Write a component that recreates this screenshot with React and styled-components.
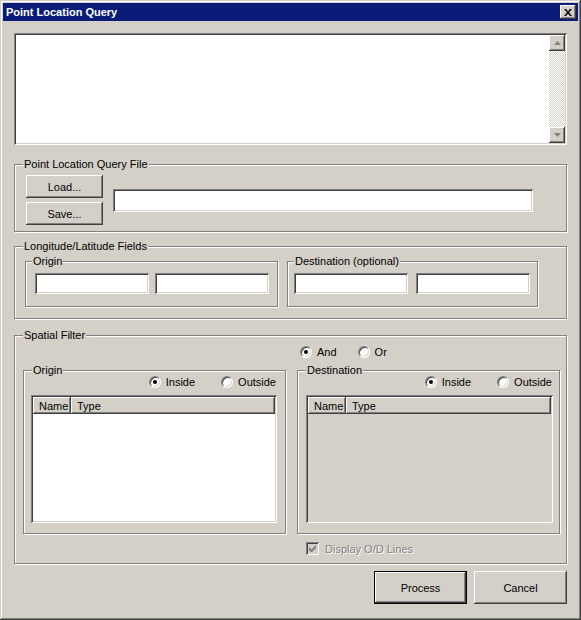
import styled, { createGlobalStyle } from "styled-components";

const GlobalStyle = createGlobalStyle`
  html, body {
    margin: 0;
    padding: 0;
    background: #d4d0c8;
  }
  body {
    font-family: "Liberation Sans", Arial, sans-serif;
    font-size: 11px;
    color: #000;
  }
  * { box-sizing: border-box; }
`;

const raised = `
  box-shadow: inset -1px -1px 0 #404040, inset 1px 1px 0 #fff,
    inset -2px -2px 0 #808080, inset 2px 2px 0 #d4d0c8;
`;

const sunken = `
  box-shadow: inset 1px 1px 0 #808080, inset -1px -1px 0 #fff,
    inset 2px 2px 0 #404040, inset -2px -2px 0 #d4d0c8;
`;

const Window = styled.div`
  width: 581px;
  height: 620px;
  background: #d4d0c8;
  padding: 3px;
  display: flex;
  flex-direction: column;
  box-shadow: inset -1px -1px 0 #404040, inset 1px 1px 0 #d4d0c8,
    inset -2px -2px 0 #808080, inset 2px 2px 0 #fff;
`;

const TitleBar = styled.div`
  height: 18px;
  background: #0a1c78;
  display: flex;
  align-items: center;
  justify-content: space-between;
  padding: 0 2px 0 2px;
`;

const Title = styled.span`
  color: #fff;
  font-weight: bold;
  font-size: 11px;
  padding-left: 1px;
`;

const CloseButton = styled.div`
  width: 16px;
  height: 14px;
  background: #d4d0c8;
  display: flex;
  align-items: center;
  justify-content: center;
  ${raised}
`;

const Body = styled.div`
  padding: 12px 11px 0 11px;
  display: flex;
  flex-direction: column;
`;

const TextBox = styled.div`
  height: 112px;
  background: #fff;
  padding: 2px;
  display: flex;
  justify-content: flex-end;
  ${sunken}
`;

const ScrollBar = styled.div`
  width: 16px;
  display: flex;
  flex-direction: column;
  justify-content: space-between;
  background-image: repeating-conic-gradient(#d4d0c8 0 25%, #fff 0 50%);
  background-size: 2px 2px;
`;

const ScrollButton = styled.div`
  width: 16px;
  height: 16px;
  background: #d4d0c8;
  display: flex;
  align-items: center;
  justify-content: center;
  ${raised}
`;

const Group = styled.div`
  position: relative;
  border: 1px solid #808080;
  box-shadow: inset 1px 1px 0 #fff, 1px 1px 0 #fff;
  margin-top: ${(p) => p.$mt ?? 0}px;
  padding: ${(p) => p.$pad};
`;

const Legend = styled.span`
  position: absolute;
  top: -7px;
  left: ${(p) => p.$left ?? 8}px;
  line-height: 13px;
  padding: 0 1px;
  background: #d4d0c8;
`;

const FileRow = styled.div`
  display: flex;
  align-items: center;
  gap: 10px;
`;

const ButtonStack = styled.div`
  display: flex;
  flex-direction: column;
  gap: 4px;
`;

const Button = styled.div`
  width: ${(p) => p.$w}px;
  height: ${(p) => p.$h}px;
  background: #d4d0c8;
  display: flex;
  align-items: center;
  justify-content: center;
  ${raised}
  ${(p) => p.$default && `border: 1px solid #000;`}
`;

const Input = styled.div`
  width: ${(p) => p.$w}px;
  height: ${(p) => p.$h}px;
  background: #fff;
  ${sunken}
`;

const SubRow = styled.div`
  display: flex;
  gap: 9px;
`;

const SubGroup = styled(Group)`
  width: ${(p) => p.$w}px;
`;

const Fields = styled.div`
  display: flex;
  gap: ${(p) => p.$gap}px;
`;

const FilterGrid = styled.div`
  display: grid;
  grid-template-columns: 263px 263px;
  column-gap: 11px;
`;

const RadioRow = styled.div`
  display: flex;
  align-items: center;
  justify-content: ${(p) => p.$justify ?? "flex-start"};
  gap: ${(p) => p.$gap}px;
  height: 13px;
  padding-left: ${(p) => p.$pl ?? 0}px;
  padding-right: ${(p) => p.$pr ?? 0}px;
`;

const RadioLabel = styled.label`
  display: flex;
  align-items: center;
  gap: 5px;
`;

const RadioCircle = styled.span`
  position: relative;
  width: 12px;
  height: 12px;
  border-radius: 50%;
  background: #fff;
  border: 1px solid;
  border-color: #808080 #fff #fff #808080;
  box-shadow: inset 1px 1px 0 #404040, inset -1px -1px 0 #d4d0c8;
  &::after {
    content: "";
    display: ${(p) => (p.$checked ? "block" : "none")};
    position: absolute;
    left: 3px;
    top: 3px;
    width: 4px;
    height: 4px;
    border-radius: 50%;
    background: #000;
  }
`;

const List = styled.div`
  margin-top: 7px;
  height: 128px;
  padding: 2px;
  background: ${(p) => (p.$disabled ? "#d4d0c8" : "#fff")};
  ${sunken}
`;

const ListHeader = styled.div`
  display: flex;
  height: 17px;
`;

const HeaderCell = styled.div`
  width: ${(p) => (p.$w ? `${p.$w}px` : "auto")};
  flex: ${(p) => (p.$w ? "none" : 1)};
  padding-left: 6px;
  display: flex;
  align-items: center;
  background: #d4d0c8;
  box-shadow: inset -1px -1px 0 #404040, inset 1px 1px 0 #fff,
    inset -2px -2px 0 #808080;
`;

const CheckRow = styled.div`
  grid-column: 2;
  margin-top: 8px;
  padding-left: 9px;
  display: flex;
  align-items: center;
  gap: 6px;
  height: 13px;
`;

const CheckBox = styled.span`
  width: 13px;
  height: 13px;
  background: #d4d0c8;
  display: flex;
  align-items: center;
  justify-content: center;
  ${sunken}
`;

const DisabledText = styled.span`
  color: #808080;
  text-shadow: 1px 1px 0 #fff;
`;

const Footer = styled.div`
  margin-top: 7px;
  display: flex;
  justify-content: flex-end;
  gap: 7px;
`;

function Radio({ checked, children }) {
  return (
    <RadioLabel>
      <RadioCircle $checked={checked} />
      {children}
    </RadioLabel>
  );
}

function ListView({ disabled }) {
  return (
    <List $disabled={disabled}>
      <ListHeader>
        <HeaderCell $w={38}>Name</HeaderCell>
        <HeaderCell>Type</HeaderCell>
      </ListHeader>
    </List>
  );
}

function Arrow({ up }) {
  return (
    <svg width="7" height="4" viewBox="0 0 7 4">
      <path
        d={up ? "M3.5 0 L7 4 L0 4 Z" : "M0 0 L7 0 L3.5 4 Z"}
        fill="#808080"
      />
    </svg>
  );
}

export default function App() {
  return (
    <>
      <GlobalStyle />
      <Window>
        <TitleBar>
          <Title>Point Location Query</Title>
          <CloseButton>
            <svg width="8" height="7" viewBox="0 0 8 7">
              <path
                d="M0 0h2l2 2.5L6 0h2L5 3.5 8 7H6L4 4.5 2 7H0l3-3.5z"
                fill="#000"
              />
            </svg>
          </CloseButton>
        </TitleBar>
        <Body>
          <TextBox>
            <ScrollBar>
              <ScrollButton>
                <Arrow up />
              </ScrollButton>
              <ScrollButton>
                <Arrow />
              </ScrollButton>
            </ScrollBar>
          </TextBox>

          <Group $mt={19} $pad="10px 11px 6px 11px">
            <Legend>Point Location Query File</Legend>
            <FileRow>
              <ButtonStack>
                <Button $w={77} $h={23}>Load...</Button>
                <Button $w={77} $h={23}>Save...</Button>
              </ButtonStack>
              <Input $w={420} $h={23} />
            </FileRow>
          </Group>

          <Group $mt={14} $pad="14px 10px 11px 10px">
            <Legend>Longitude/Latitude Fields</Legend>
            <SubRow>
              <SubGroup $w={253} $pad="11px 8px 12px 9px">
                <Legend $left={6}>Origin</Legend>
                <Fields $gap={6}>
                  <Input $w={114} $h={21} />
                  <Input $w={114} $h={21} />
                </Fields>
              </SubGroup>
              <SubGroup $w={251} $pad="11px 7px 12px 6px">
                <Legend $left={6}>Destination (optional)</Legend>
                <Fields $gap={8}>
                  <Input $w={114} $h={21} />
                  <Input $w={114} $h={21} />
                </Fields>
              </SubGroup>
            </SubRow>
          </Group>

          <Group $mt={16} $pad="9px 7px 8px 8px">
            <Legend>Spatial Filter</Legend>
            <FilterGrid>
              <div />
              <RadioRow $gap={21} $pl={3}>
                <Radio checked>And</Radio>
                <Radio>Or</Radio>
              </RadioRow>

              <Group $mt={12} $pad="4px 8px 10px 7px">
                <Legend>Origin</Legend>
                <RadioRow $justify="flex-end" $gap={26} $pr={1}>
                  <Radio checked>Inside</Radio>
                  <Radio>Outside</Radio>
                </RadioRow>
                <ListView />
              </Group>
              <Group $mt={12} $pad="4px 6px 10px 8px">
                <Legend>Destination</Legend>
                <RadioRow $justify="flex-end" $gap={26} $pr={1}>
                  <Radio checked>Inside</Radio>
                  <Radio>Outside</Radio>
                </RadioRow>
                <ListView disabled />
              </Group>

              <CheckRow>
                <CheckBox>
                  <svg width="7" height="7" viewBox="0 0 7 7">
                    <path
                      d="M0 2v3l2 2h1l4-4V0L2.5 4.5z"
                      fill="#808080"
                    />
                  </svg>
                </CheckBox>
                <DisabledText>Display O/D Lines</DisabledText>
              </CheckRow>
            </FilterGrid>
          </Group>

          <Footer>
            <Button $w={93} $h={33} $default>
              Process
            </Button>
            <Button $w={93} $h={33}>
              Cancel
            </Button>
          </Footer>
        </Body>
      </Window>
    </>
  );
}
